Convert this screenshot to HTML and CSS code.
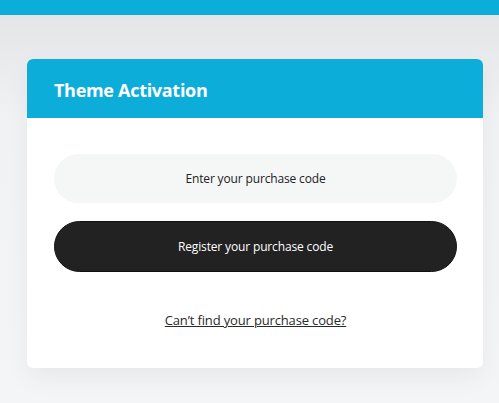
FILE: index.html
```html
<!DOCTYPE html>
<html>
<head>
<meta charset="utf-8">
<link rel="stylesheet" href="styles.css">
</head>
<body>
<div class="topbar"></div>
<main class="page">
  <section class="card">
    <header class="card-head">
      <h1 class="title">Theme Activation</h1>
    </header>
    <div class="card-body">
      <div class="field">Enter your purchase code</div>
      <button class="btn">Register your purchase code</button>
      <a class="link" href="#">Can’t find your purchase code?</a>
    </div>
  </section>
</main>
</body>
</html>
```

FILE: styles.css
```css
* { box-sizing: border-box; }
html, body { margin: 0; padding: 0; }
body {
  font-family: "Open Sans", "Noto Sans", "Liberation Sans", sans-serif;
  background: linear-gradient(to bottom, #e4e5e7 15px, #f1f2f4 120px, #f4f5f7 100%);
  height: 403px;
  overflow: hidden;
}
.topbar {
  height: 15px;
  background: #0dadda;
}
.page {
  padding: 44px 16px 0 27px;
}
.card {
  width: 456px;
  background: #fff;
  border-radius: 6px;
  overflow: hidden;
  box-shadow: 0 10px 24px rgba(0, 0, 0, 0.05);
}
.card-head {
  height: 59px;
  background: #0dadda;
  display: flex;
  align-items: center;
  padding-left: 27px;
}
.title {
  margin: 0;
  color: #fff;
  font-size: 18px;
  font-weight: 700;
  letter-spacing: -0.3px;
  padding-top: 2px;
}
.card-body {
  padding: 36px 26px 0 27px;
  height: 250px;
  display: flex;
  flex-direction: column;
}
.field {
  height: 49px;
  border-radius: 25px;
  background: #f5f6f6;
  display: flex;
  align-items: center;
  justify-content: center;
  font-size: 12px;
  letter-spacing: -0.15px;
  color: #222;
}
.btn {
  margin-top: 18px;
  height: 51px;
  border-radius: 26px;
  border: 1px solid #111;
  background: #222;
  color: #fff;
  font-family: inherit;
  font-size: 12px;
  letter-spacing: -0.15px;
  padding: 0;
}
.link {
  margin-top: 39px;
  align-self: center;
  font-size: 13px;
  letter-spacing: -0.15px;
  color: #2a2a2a;
  text-decoration: underline;
}
```
